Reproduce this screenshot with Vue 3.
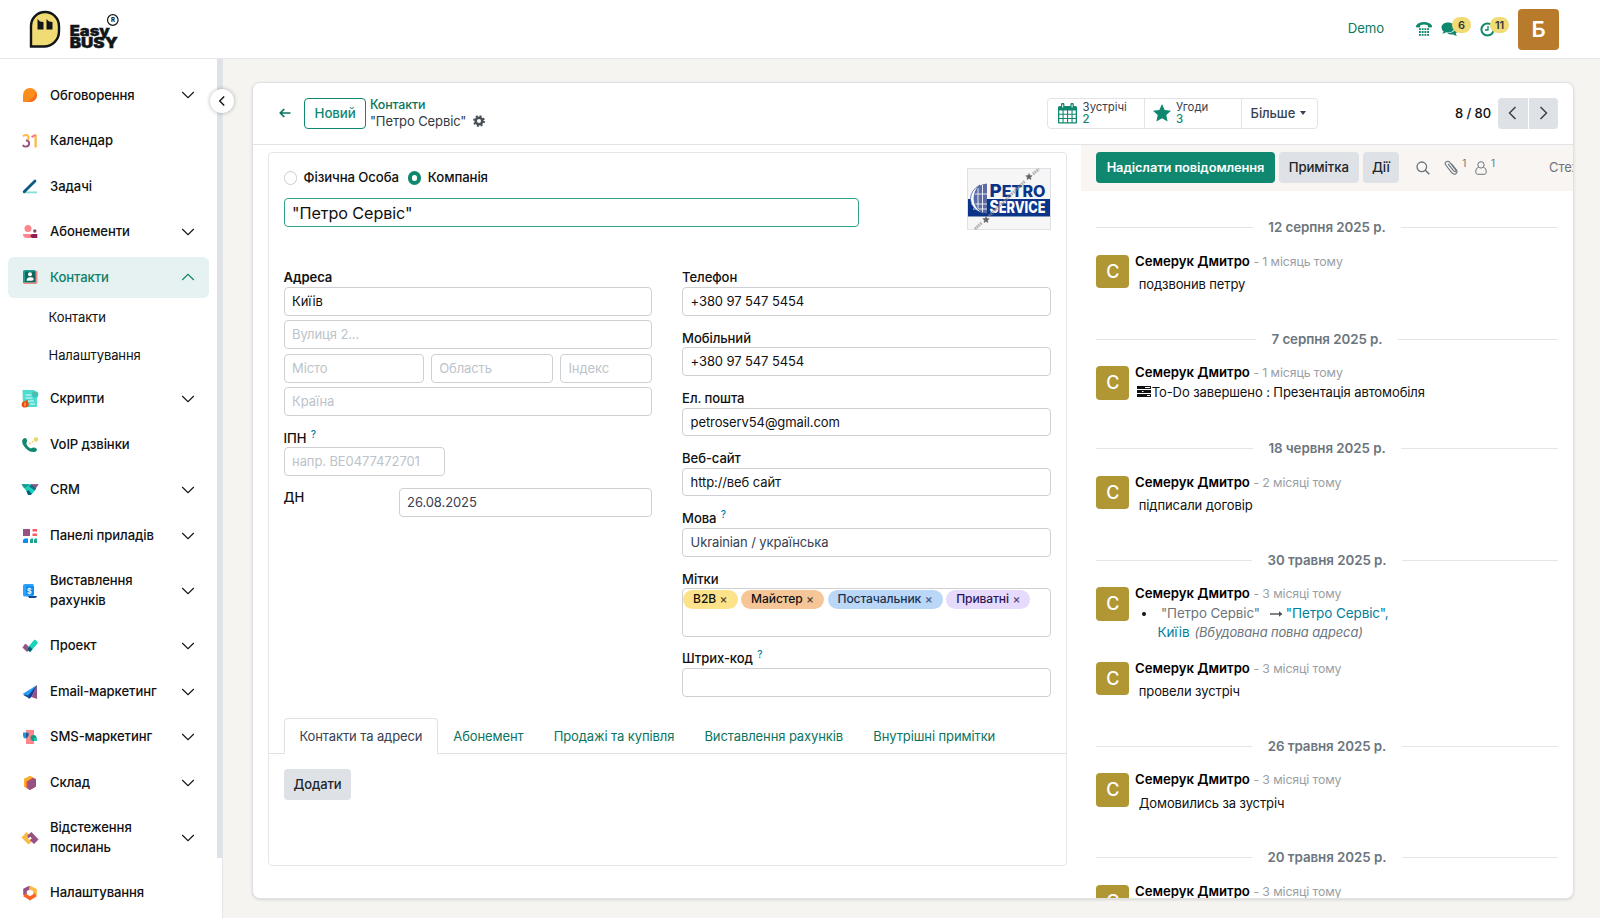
<script setup>
import { ref } from 'vue'

const menu = ref([
  { icon: 'discuss', label: 'Обговорення', arrow: true },
  { icon: 'calendar', label: 'Календар' },
  { icon: 'todo', label: 'Задачі' },
  { icon: 'members', label: 'Абонементи', arrow: true },
  { icon: 'contacts', label: 'Контакти', arrow: true, open: true, children: ['Контакти', 'Налаштування'] },
  { icon: 'scripts', label: 'Скрипти', arrow: true },
  { icon: 'voip', label: 'VoIP дзвінки' },
  { icon: 'crm', label: 'CRM', arrow: true },
  { icon: 'dashboard', label: 'Панелі приладів', arrow: true },
  { icon: 'invoice', label: 'Виставлення рахунків', arrow: true },
  { icon: 'project', label: 'Проект', arrow: true },
  { icon: 'email', label: 'Email-маркетинг', arrow: true },
  { icon: 'sms', label: 'SMS-маркетинг', arrow: true },
  { icon: 'stock', label: 'Склад', arrow: true },
  { icon: 'links', label: 'Відстеження посилань', arrow: true },
  { icon: 'settings', label: 'Налаштування' }
])

// 18x18 app icons
const icons = {
  discuss: '<path d="M2 16V9a7 7 0 0 1 14 0 7 7 0 0 1-7 7z" fill="#fb8c1e"/><path d="M15 5.500a7 7 0 0 1-6 10.500H4.500Q13 14 15 5.500z" fill="#fa6a1f"/>',
  calendar: '<g fill="none" stroke-width="1.900"><path d="M2 4.300Q3.100 3 4.900 3q2.700.2 2.700 2.700Q7.500 8 5 8.600" stroke="#fbb945"/><path d="M5 8.400q3.200.3 3.200 3Q8 14.600 4.800 14.600q-2 0-3-1.700" stroke="#985184"/><path d="M14.600 2.300v13.200" stroke="#fbb945" stroke-width="2.300"/><path d="M10.600 5.200l3.600-2.200" stroke="#f4737a" stroke-width="2"/></g>',
  todo: '<path d="M3 15.400h13" stroke="#88dfd3" stroke-width="1.900"/><path d="M3.200 14.700L14 4" stroke="#0b5b82" stroke-width="2.800" stroke-linecap="round"/>',
  members: '<circle cx="7" cy="5.500" r="3.500" fill="#fc868b"/><circle cx="13.800" cy="8" r="1.700" fill="#953b6b"/><path d="M2 11h9.500v4H6a4 4 0 0 1-4-4z" fill="#fc868b"/><path d="M9.500 13.500a2.500 2.500 0 0 1 2.500-2.500h4.300v4h-5z" fill="#8c1c52"/>',
  contacts: '<rect x="2" y="2" width="13" height="13.500" rx="1.500" fill="#1aa08e"/><path d="M15 3h1.500v11a2 2 0 0 1-2 2H3v-1.500h12z" fill="#f18a86"/><rect x="4" y="3.500" width="10" height="10.500" fill="#11675f"/><circle cx="9" cy="6.300" r="2" fill="#fff"/><path d="M5.500 12.800q0-3.500 3.500-3.500 3.700-.4 3.700 1.700 0 1.800-2 1.800z" fill="#fff"/>',
  scripts: '<path d="M1.500 0h12v5l4-1q-1.500 2-1.500 5v8h-14z" fill="#4fdcd0"/><circle cx="14" cy="4.500" r="3.300" fill="#35c7bd"/><path d="M4.500 5h6M4.500 8h7M6 11h7M9 14h5" stroke="#e2fbf8" stroke-width="1"/><path d="M13.300 3q1.800-.3.800 1.500" stroke="#f47f4a" fill="none"/><path d="M.6 14.500q0-3 3.500-3.500l2.900-1.500q-1 2.500.8 4.500 0 3.600-3.800 3.600-3.400 0-3.400-3.100z" fill="#e94b12"/><path d="M4 12.500v3.800" stroke="#fbb945" stroke-width="1.200"/>',
  voip: '<path d="M2.500 2.600Q4 1.200 5.300 2.600q1.600 2 .3 3.800-.7 1.200.4 2.900 1 1.700 2.700 2.600 1.400.7 2.700-.2 2.200-.8 4.400 1.200.7 2.200-2.300 3-4.600.6-8.600-3.500Q.6 8 1.200 4.400z" fill="#10876f"/><path d="M8 7.400h1.800M10.800 6l1.400-.6" stroke="#eed46c" stroke-width="1.600"/><circle cx="15" cy="3.500" r="2.200" fill="#eed46c"/>',
  crm: '<path d="M.5 3.200h17L11 12.500 9 14l-2-1.500z" fill="#1fc9b3"/><path d="M10 3.200h7.600L14 8.600z" fill="#985184"/><path d="M.5 3.200H9L6 6 3 7z" fill="#1a9a93"/><path d="M5 6.500L9 3.500l6 4.500-4.500 5.500z" fill="#1ad3bb"/><path d="M8 5.500l2.500-2 4.500 4-1.300 1.900z" fill="#1b6b84"/><path d="M5.500 10.500l2-1.500 3.500 4L9 14H7z" fill="#005e7a"/>',
  dashboard: '<rect x="2" y="2" width="7" height="7" fill="#985184"/><path d="M11.500 2H16v2.500h-4.500zM11.500 6.500H16V9h-4.500z" fill="#fc5b62"/><path d="M3.500 11.500H7V16H2v-3z" fill="#0c8cf5"/><path d="M10 11.500h2V16H9v-3zM14 11.500h2V16h-3v-3z" fill="#1aa58f"/>',
  invoice: '<path d="M2 4a2 2 0 0 1 2-2h8.500v12.500H4A2 2 0 0 1 2 13z" fill="#2ba1fb"/><path d="M5 4h8v9H5z" fill="#108cf0"/><path d="M7 14h9q-.4 2-2 2H8z" fill="#10498f"/><text x="8.200" y="11.500" font-size="7" font-weight="700" fill="#fff" text-anchor="middle">$</text>',
  project: '<path d="M4.500 7L9 11.500l-3 3-4-4z" fill="#985184" stroke="#985184" stroke-linejoin="round"/><path d="M13.500 3l2.500 1.500v2L9 14.700 6 12.200z" fill="#1ad3bb" stroke="#1ad3bb" stroke-linejoin="round"/><path d="M5.800 12.300L8.500 9.500l3 2.500L9 15z" fill="#0b5b72"/>',
  email: '<path d="M2.300 12L16 2.500 8.500 15.500z" fill="#124b9c"/><path d="M1.500 11L16 2 7 12.500z" fill="#2a9df4"/><path d="M16 2v14l-5.500-2z" fill="#985184"/><path d="M16 2l-5.500 12-3 2 1-3.500z" fill="#153f96"/>',
  sms: '<path d="M5 2h8v14H5z" fill="#fc868b"/><path d="M2 4.500h5.300v3q-.5 3-3 3-2.300-.2-2.300-3z" fill="#1b97df"/><circle cx="12.500" cy="10" r="3" fill="#159b85"/><path d="M13 10h3v3h-3z" fill="#22c8ad"/><path d="M5 5h2.500v3L5 10z" fill="#26598b"/>',
  stock: '<path d="M3 5l6-3 6 3v7.500L9 16l-6-3.500z" fill="#fa6a1f"/><path d="M3 5l6-3 3 1.500-7 4v6l-2-1z" fill="#fbb02d"/><path d="M6.500 7.500L12 4l3 1.500v7L9 16l-2.500-1.500z" fill="#985184"/>',
  links: '<path d="M.5 8.500L5.500 3l3.800 3.500-2.500 3L8.500 11l1.500-1.200 2 1.800-4.500 4z" fill="#fbb945"/><path d="M6.300 6.500L10.500 3l7 7.500-4.500 4.500-4-3.800 1.800-2-1.500-1.500-2 1.500z" fill="#985184"/>',
  settings: '<g fill="none" stroke-width="3.600"><path d="M4 11V5.900L9 3.300" stroke="#985184"/><path d="M8.500 3.300L14 6v5.200" stroke="#fbb945"/><path d="M14.800 10.700L9 14.300l-5.800-3.600" stroke="#fa6426"/></g>'
}

const contact = ref({
  name: '"Петро Сервіс"',
  street: 'Киїів',
  birthday: '26.08.2025'
})

const tags = [
  { text: 'B2B', color: 'yellow' },
  { text: 'Майстер', color: 'orange' },
  { text: 'Постачальник', color: 'blue' },
  { text: 'Приватні', color: 'violet' }
]

const tabs = ['Контакти та адреси', 'Абонемент', 'Продажі та купівля', 'Виставлення рахунків', 'Внутрішні примітки']
const activeTab = ref(0)

const thread = [
  { date: '12 серпня 2025 р.', items: [{ ago: '1 місяць тому', kind: 'note', body: 'подзвонив петру' }] },
  { date: '7 серпня 2025 р.', items: [{ ago: '1 місяць тому', kind: 'activity', body: 'To-Do завершено : Презентація автомобіля' }] },
  { date: '18 червня 2025 р.', items: [{ ago: '2 місяці тому', kind: 'note', body: 'підписали договір' }] },
  {
    date: '30 травня 2025 р.',
    items: [
      { ago: '3 місяці тому', kind: 'change' },
      { ago: '3 місяці тому', kind: 'note', body: 'провели зустріч' }
    ]
  },
  { date: '26 травня 2025 р.', items: [{ ago: '3 місяці тому', kind: 'note', body: 'Домовились за зустріч' }] },
  { date: '20 травня 2025 р.', items: [{ ago: '3 місяці тому', kind: 'note' }] }
]
</script>

<template>
  <div class="app">
    <header class="topbar">
      <svg class="brand" width="92" height="41" viewBox="0 0 92 41">
        <path d="M2 37.500V17a14 14 0 0 1 28 0v5.500a15 15 0 0 1-15 15z" fill="#f0db74" stroke="#121619" stroke-width="2.400" />
        <path d="M8.500 10l2.500 2.500 3.500.5v7.500h-6zM17.500 10l2.500 2.500 3.500.5v7.500h-6z" fill="#121619" />
        <text x="40.800" y="27" class="brand-text" textLength="40" lengthAdjust="spacingAndGlyphs">Easy</text>
        <text x="40.800" y="38.500" class="brand-text" textLength="48" lengthAdjust="spacingAndGlyphs">BUSY</text>
        <circle cx="83.800" cy="11" r="5.300" fill="#fff" stroke="#121619" stroke-width="1.200" />
        <text x="83.800" y="13.200" font-size="6" font-weight="700" text-anchor="middle">R</text>
      </svg>
      <div class="systray">
        <span class="demo">Demo</span>
        <svg class="ico-phone" width="18" height="16" viewBox="0 0 18 16">
          <path d="M1 6.200V4.700Q3.500 1 9 1t8 3.700v1.500l-3.700.3-.7-2.300Q9 3 5.400 4.200l-.7 2.300z" fill="#10876f" />
          <path d="M4 8.200h10M4 11h10M4 13.800h10" stroke="#10876f" stroke-width="1.800" stroke-dasharray="1.900 .8" />
        </svg>
        <span class="tray-item chat">
          <svg width="17" height="15" viewBox="0 0 17 15">
            <path d="M7 .5c4 0 6.500 2.300 6.500 5S11 10.500 7 10.500q-1 0-2-.2-1.500 1.200-3.700 1.300 1-1 1.200-2.300Q.5 7.800.5 5.500C.5 2.800 3 .5 7 .5z" fill="#10876f" />
            <path d="M14.500 5q2 1.200 2 3.300 0 1.900-1.700 3.200.2 1.300 1.200 2.300-2.300-.1-3.700-1.400-4 .5-6-1.200 7.700 0 8.200-6.200z" fill="#10876f" />
          </svg>
          <b class="badge">6</b>
        </span>
        <span class="tray-item clock">
          <svg width="15" height="15" viewBox="0 0 15 15">
            <circle cx="7.500" cy="7.500" r="6.100" fill="none" stroke="#10876f" stroke-width="2" />
            <path d="M8 4v4H5" fill="none" stroke="#10876f" stroke-width="1.300" />
          </svg>
          <b class="badge">11</b>
        </span>
        <span class="me">Б</span>
      </div>
    </header>

    <div class="body">
      <aside class="sidebar">
        <nav class="menu">
          <template v-for="item in menu" :key="item.icon">
            <div class="menu-item" :class="{ active: item.open }" @click="item.open = item.arrow && !item.open">
              <svg class="menu-icon" width="18" height="18" viewBox="0 0 18 18" v-html="icons[item.icon]"></svg>
              <span class="menu-label">{{ item.label }}</span>
              <svg v-if="item.arrow" class="menu-arrow" width="14" height="8" viewBox="0 0 14 8">
                <path :d="item.open ? 'M1.200 7L7 1.300 12.800 7' : 'M1.200 1L7 6.700 12.800 1'" fill="none" stroke="currentColor" stroke-width="1.100" />
              </svg>
            </div>
            <template v-if="item.open">
              <div v-for="child in item.children" :key="child" class="submenu-item">{{ child }}</div>
              <div class="submenu-end"></div>
            </template>
          </template>
        </nav>
        <div class="scrollbar"></div>
        <button class="collapse">
          <svg width="8" height="12" viewBox="0 0 8 12"><path d="M6.200 1.500L1.700 6l4.500 4.500" fill="none" stroke="#111" stroke-width="1.400" /></svg>
        </button>
      </aside>

      <main class="page">
        <section class="card">
          <div class="control-panel">
            <svg class="back" width="12" height="10" viewBox="0 0 12 10"><path d="M11.500 5H1.500M5.300 1L1.300 5l4 4" fill="none" stroke="#0b7460" stroke-width="1.700" /></svg>
            <button class="btn-new">Новий</button>
            <div class="crumbs">
              <a>Контакти</a>
              <div class="crumb-current">
                <span>{{ contact.name }}</span>
                <svg width="12" height="12" viewBox="0 0 12 12">
                  <circle cx="6" cy="6" r="3.300" fill="none" stroke="#495057" stroke-width="2.600" />
                  <circle cx="6" cy="6" r="4.900" fill="none" stroke="#495057" stroke-width="2" stroke-dasharray="1.950 1.900" />
                </svg>
              </div>
            </div>
            <div class="stats">
              <div class="stat">
                <svg width="19" height="21" viewBox="0 0 19 21">
                  <path d="M0 4.500A1.500 1.500 0 0 1 1.500 3H3V1.500a1.700 1.700 0 0 1 3.400 0V3h6V1.500a1.700 1.700 0 0 1 3.400 0V3h1.700A1.500 1.500 0 0 1 19 4.500v15a1 1 0 0 1-1 1H1a1 1 0 0 1-1-1z" fill="#10876f" />
                  <path d="M4.700 1.500v3M14.100 1.500v3" stroke="#fff" stroke-width="1" />
                  <path d="M1.300 7.500h3.200v3.200H1.300zM5.600 7.500h3.400v3.200H5.600zM10.100 7.500h3.400v3.200h-3.400zM14.600 7.500h3.100v3.200h-3.100zM1.300 11.800h3.200V15H1.300zM5.600 11.800h3.400V15H5.600zM10.100 11.800h3.400V15h-3.400zM14.600 11.800h3.100V15h-3.100zM1.300 16.100h3.200v3.100H1.300zM5.600 16.100h3.400v3.100H5.600zM10.100 16.100h3.400v3.100h-3.400zM14.600 16.100h3.100v3.100h-3.100z" fill="#fff" />
                </svg>
                <div class="stat-text">Зустрічі<b>2</b></div>
              </div>
              <div class="stat stat-deals">
                <svg width="18" height="18" viewBox="0 0 18 18"><path d="M9 0l2.700 6 6.300.7-4.700 4.400 1.300 6.500L9 14.300l-5.600 3.300 1.300-6.500L0 6.700 6.300 6z" fill="#10876f" /></svg>
                <div class="stat-text">Угоди<b>3</b></div>
              </div>
              <div class="stat-more">Більше <i class="caret"></i></div>
            </div>
            <div class="pager">
              <span>8 / 80</span>
              <button class="prev"><svg width="9" height="14" viewBox="0 0 9 14"><path d="M7.500 1L1.500 7l6 6" fill="none" stroke="#343a40" stroke-width="1.400" /></svg></button>
              <button class="next"><svg width="9" height="14" viewBox="0 0 9 14"><path d="M1.500 1l6 6-6 6" fill="none" stroke="#343a40" stroke-width="1.400" /></svg></button>
            </div>
          </div>

          <div class="content">
            <div class="form-side">
              <div class="sheet">
                <div class="sheet-head">
                  <div class="head-main">
                    <div class="radios">
                      <i class="radio"></i><span class="radio-label">Фізична Особа</span>
                      <i class="radio checked"></i><span class="radio-label">Компанія</span>
                    </div>
                    <div class="input name-input">{{ contact.name }}</div>
                  </div>
                  <svg class="photo" width="84" height="62" viewBox="0 0 84 62">
                    <rect x=".5" y=".5" width="83" height="61" fill="#f6f6f7" stroke="#dee2e6" />
                    <rect x="1" y="31" width="82" height="17.500" fill="#0b3488" />
                    <path d="M20 15.500C9 17 4 24 4 31.500S10 44 20 45.500z" fill="#5c6aa5" />
                    <path d="M11 20v23M15.500 17v28M6 26h14M4 36h16M6 41h14" stroke="#f6f6f7" stroke-width=".9" />
                    <path d="M13 17Q3.500 22 3.500 31.500q.5 10 13 14Q7 40 7 31t6-14z" fill="#fff" stroke="#31539b" stroke-width=".7" />
                    <text x="22.500" y="29.300" class="photo-text top" textLength="56" lengthAdjust="spacingAndGlyphs"><tspan font-size="18">P</tspan>ETRO</text>
                    <text x="22.500" y="45.300" class="photo-text bottom" textLength="56" lengthAdjust="spacingAndGlyphs"><tspan font-size="17">S</tspan>ERVICE</text>
                    <path d="M8 61l7-6.500M22 48L58 13M66 6l6-5" fill="none" stroke="#8c8c8c" stroke-opacity=".65" stroke-width="3" stroke-dasharray="1.700 .7" />
                    <path d="M19 48.500l1 2 2.200.2-1.600 1.600.4 2.200-2-1.100-2 1.100.4-2.200-1.600-1.600 2.200-.2zM62 5.500l1 2 2.200.2-1.600 1.600.4 2.200-2-1.100-2 1.100.4-2.200-1.600-1.600 2.200-.2z" fill="#666" stroke="#666" stroke-width=".5" />
                  </svg>
                </div>

                <div class="groups">
                  <div class="group">
                    <label class="bold">Адреса</label>
                    <div class="address">
                      <div class="input">{{ contact.street }}</div>
                      <div class="input empty">Вулиця 2...</div>
                      <div class="address-row">
                        <div class="input empty">Місто</div>
                        <div class="input empty">Область</div>
                        <div class="input empty">Індекс</div>
                      </div>
                      <div class="input empty">Країна</div>
                    </div>
                    <label class="vat-label">ІПН <sup>?</sup></label>
                    <div class="input empty vat">напр. BE0477472701</div>
                    <div class="birthday">
                      <label>ДН</label>
                      <div class="input dark">{{ contact.birthday }}</div>
                    </div>
                  </div>
                  <div class="group">
                    <label>Телефон</label>
                    <div class="input field">+380 97 547 5454</div>
                    <label>Мобільний</label>
                    <div class="input field">+380 97 547 5454</div>
                    <label>Ел. пошта</label>
                    <div class="input field">petroserv54@gmail.com</div>
                    <label>Веб-сайт</label>
                    <div class="input field">http://веб сайт</div>
                    <label>Мова <sup>?</sup></label>
                    <div class="input field dark">Ukrainian / українська</div>
                    <label>Мітки</label>
                    <div class="tags">
                      <span v-for="tag in tags" :key="tag.text" class="tag" :class="tag.color">{{ tag.text }}<i>×</i></span>
                    </div>
                    <label>Штрих-код <sup>?</sup></label>
                    <div class="input"></div>
                  </div>
                </div>

                <div class="tabs">
                  <div v-for="(tab, i) in tabs" :key="tab" class="tab" :class="{ current: i === activeTab }" @click="activeTab = i">{{ tab }}</div>
                </div>
                <button class="btn-grey btn-add">Додати</button>
              </div>
            </div>

            <div class="chatter">
              <div class="chatter-top">
                <button class="btn-send">Надіслати повідомлення</button>
                <button class="btn-grey btn-note">Примітка</button>
                <button class="btn-grey btn-actions">Дії</button>
                <svg class="ico-search" width="14" height="14" viewBox="0 0 14 14"><circle cx="5.800" cy="5.800" r="4.800" fill="none" stroke="#6c757d" stroke-width="1.300" /><path d="M9.300 9.300l4 4" stroke="#6c757d" stroke-width="1.600" /></svg>
                <svg class="ico-clip" width="14" height="16" viewBox="0 0 14 16"><path d="M4.200 4.200l5.600 7q.9.900 1.700.3.800-.7.100-1.700L5.600 2.200Q3.900.5 2.200 1.700.5 3.100 1.700 5l6.200 7.900q2 2.100 4 .8 1.900-1.600.6-3.700L7.800 4.100" fill="none" stroke="#6c757d" stroke-width="1.100" stroke-linecap="round" /></svg>
                <span class="count">1</span>
                <svg class="ico-user" width="12" height="14" viewBox="0 0 12 14"><circle cx="6" cy="3.900" r="3.200" fill="none" stroke="#6c757d" /><path d="M3.500 6.300Q.8 7 .8 10v1.300q0 2 1.900 2h6.600q1.900 0 1.900-2V10q0-3-2.700-3.700" fill="none" stroke="#6c757d" /></svg>
                <span class="count">1</span>
                <span class="follow">Стежити</span>
              </div>
              <div class="thread">
                <template v-for="day in thread" :key="day.date">
                  <div class="day"><hr /><span>{{ day.date }}</span><hr /></div>
                  <div v-for="(msg, i) in day.items" :key="i" class="message" :class="msg.kind">
                    <div class="avatar">С</div>
                    <div class="message-main">
                      <div class="message-head"><b>Семерук Дмитро</b> <small>- {{ msg.ago }}</small></div>
                      <ul v-if="msg.kind === 'change'" class="changes">
                        <li>
                          <span class="old">"Петро Сервіс"</span>
                          <svg width="13" height="8" viewBox="0 0 13 8"><path d="M0 4h10" stroke="#495057" stroke-width="1.400" /><path d="M9 1.300L12.500 4 9 6.700z" fill="#495057" /></svg>
                          <span class="new">"Петро Сервіс",<br />Киїів</span>
                          <em>(Вбудована повна адреса)</em>
                        </li>
                      </ul>
                      <div v-else class="message-body">
                        <svg v-if="msg.kind === 'activity'" width="14" height="11" viewBox="0 0 14 11">
                          <path d="M0 0h14v3H0zM0 4h14v3H0zM0 8h14v3H0z" fill="#111" />
                          <path d="M8 1.500h5M5 5.500h1.500M10 9.500h3" stroke="#fff" stroke-width="1" />
                        </svg>{{ msg.body }}
                      </div>
                    </div>
                  </div>
                </template>
              </div>
            </div>
          </div>
        </section>
      </main>
    </div>
  </div>
</template>

<style>
body {
  margin: 0;
  background: #f5f4f0;
  overflow: hidden;
}
</style>

<style scoped>
* {
  box-sizing: border-box;
}
.app {
  display: flex;
  flex-direction: column;
  height: 918px;
  overflow: hidden;
  font-family: Inter, 'Liberation Sans', sans-serif;
  font-size: 13px;
  letter-spacing: -0.1px;
  line-height: 19px;
  color: #111;
}
button {
  font: inherit;
  letter-spacing: inherit;
  border: 0;
  margin: 0;
  padding: 0;
}

/* top bar */
.topbar {
  display: flex;
  justify-content: space-between;
  align-items: center;
  flex: none;
  height: 59px;
  padding: 0 41px 0 29px;
  background: #fff;
  border-bottom: 1px solid #e6e7ea;
}
.brand-text {
  font-size: 14px;
  font-weight: 900;
  letter-spacing: 0;
  fill: #121619;
  stroke: #121619;
  stroke-width: 0.4px;
}
.systray {
  display: flex;
  align-items: center;
}
.demo {
  margin: -2px 31px 0 0;
  color: #0b7a60;
  font-size: 13.2px;
}
.ico-phone {
  margin-right: 8px;
}
.tray-item {
  position: relative;
  display: flex;
}
.chat {
  width: 39px;
}
.clock {
  width: 38px;
}
.badge {
  position: absolute;
  left: 11px;
  top: -5px;
  min-width: 19px;
  height: 16px;
  padding: 0 4px;
  border-radius: 8px;
  background: #f0db74;
  color: #333;
  font-size: 11px;
  font-weight: 600;
  line-height: 16px;
  text-align: center;
}
.clock .badge {
  left: 10px;
}
.me {
  width: 41px;
  height: 41px;
  border-radius: 4px;
  background: #b87a2b;
  color: #fff;
  font-size: 22px;
  font-weight: 600;
  line-height: 41px;
  text-align: center;
}

/* sidebar */
.body {
  display: flex;
  flex: 1;
  min-height: 0;
}
.sidebar {
  position: relative;
  display: flex;
  flex: none;
  width: 223px;
  background: #fff;
  border-right: 1px solid #e3e5e8;
}
.menu {
  flex: 1;
  padding: 15.5px 8.4px 0 7.6px;
  overflow: hidden;
}
.menu-item {
  display: flex;
  align-items: center;
  min-height: 41.55px;
  margin-bottom: 4px;
  padding: 11px 14px 11px 13.5px;
  border-radius: 6px;
  font-size: 13.1px;
  font-weight: 500;
}
.menu-icon {
  flex: none;
  margin-right: 11px;
}
.menu-label {
  flex: 1;
  padding-right: 20px;
  line-height: 19.4px;
}
.menu-item.active {
  margin-bottom: 0;
  background: #e5f2f1;
  color: #0f8069;
}
.submenu-item {
  height: 38px;
  padding-left: 41px;
  line-height: 38px;
}
.submenu-end {
  height: 4px;
}
.scrollbar {
  width: 5px;
  height: 799px;
  background: #dee2e8;
}
.collapse {
  position: absolute;
  right: -12px;
  top: 30px;
  z-index: 2;
  display: flex;
  align-items: center;
  justify-content: center;
  width: 24px;
  height: 24px;
  border-radius: 50%;
  background: #fff;
  box-shadow: 0 0 4px rgba(0, 0, 0, 0.3);
}

/* card */
.page {
  flex: 1;
  min-width: 0;
  padding: 22.5px 26px 0 29.4px;
  background: #f5f4f0;
}
.card {
  display: flex;
  flex-direction: column;
  height: 817px;
  background: #fff;
  border: 1px solid #e0e1e3;
  border-radius: 8px;
  box-shadow: 0 1px 3px rgba(0, 0, 0, 0.12);
  overflow: hidden;
}
.control-panel {
  display: flex;
  align-items: center;
  flex: none;
  height: 62.2px;
  padding: 0.6px 15px 0 25.5px;
  border-bottom: 1px solid #e1e3e6;
}
.back {
  margin-right: 13.5px;
}
.btn-new {
  width: 61.5px;
  height: 30.5px;
  margin-right: 4px;
  border: 1px solid #10876f;
  border-radius: 4px;
  background: #fff;
  color: #10876f;
  font-size: 13.33px;
  font-weight: 500;
}
.crumbs {
  line-height: 16px;
}
.crumbs a {
  display: block;
  color: #0b7460;
  font-size: 12.4px;
  font-weight: 500;
}
.crumb-current {
  display: flex;
  align-items: center;
  gap: 6.5px;
  color: #343a40;
}
.stats {
  display: flex;
  height: 30.5px;
  margin-left: auto;
  margin-right: 137.5px;
  border: 1px solid #e1e3e6;
  border-radius: 4px;
  color: #374151;
}
.stat {
  display: flex;
  align-items: center;
  gap: 5.5px;
  width: 97px;
  padding-left: 10.5px;
  border-right: 1px solid #e1e3e6;
}
.stat-deals {
  padding-left: 8px;
}
.stat-text {
  font-size: 11.4px;
  letter-spacing: 0;
  line-height: 12.5px;
}
.stat-text b {
  display: block;
  color: #10876f;
  font-weight: 500;
}
.stat-more {
  display: flex;
  align-items: center;
  width: 75px;
  padding-left: 9px;
  font-weight: 500;
}
.caret {
  margin-left: 5px;
  border: 3.5px solid transparent;
  border-top: 4px solid #374151;
  border-bottom: 0;
}
.pager {
  display: flex;
  align-items: center;
  font-weight: 500;
}
.pager span {
  margin-right: 7px;
}
.pager button {
  display: flex;
  align-items: center;
  justify-content: center;
  width: 29.5px;
  height: 30.5px;
  background: #dee2e6;
}
.pager .prev {
  margin-right: 1px;
  border-radius: 4px 0 0 4px;
}
.pager .next {
  border-radius: 0 4px 4px 0;
}

/* form */
.content {
  display: flex;
  flex: 1;
  min-height: 0;
}
.form-side {
  flex: none;
  width: 827.6px;
  padding: 7px 14.4px 0 14.7px;
}
.sheet {
  height: 714px;
  border: 1px solid #e4e6e9;
  border-radius: 4px;
}
.sheet-head {
  display: flex;
  justify-content: space-between;
  height: 115.6px;
  padding: 15.2px 15px 0 14.5px;
}
.radios {
  display: flex;
  align-items: center;
  height: 20px;
  margin-bottom: 10px;
}
.radio {
  width: 13.5px;
  height: 13.5px;
  margin-right: 6.5px;
  border: 1px solid #c9cdd2;
  border-radius: 50%;
}
.radio.checked {
  margin-left: 9px;
  border: 4px solid #10876f;
}
.radio-label {
  font-size: 13.2px;
  font-weight: 500;
}
.name-input.input {
  width: 575px;
  height: 29.5px;
  line-height: 28px;
  font-size: 16.2px;
  border-color: #2fa389;
}
.photo-text {
  font-size: 15.5px;
  font-weight: 800;
  letter-spacing: 0;
}
.photo-text.top {
  fill: #0b3488;
}
.photo-text.bottom {
  fill: #fff;
}
.groups {
  display: flex;
  gap: 30px;
  height: 450px;
  padding: 0 15px 0 14.5px;
}
.group {
  display: flex;
  flex-direction: column;
  flex: 1;
}
label {
  display: block;
  height: 18.7px;
  font-size: 13.1px;
  font-weight: 500;
  line-height: 18px;
  white-space: nowrap;
}
label.bold {
  font-weight: 600;
}
sup {
  position: relative;
  top: -5px;
  margin-left: 1px;
  color: #0180a5;
  font-size: 10px;
  line-height: 0;
  vertical-align: baseline;
}
.input {
  height: 28.7px;
  padding: 0 7.5px;
  border: 1px solid #ced0d3;
  border-radius: 4px;
  line-height: 27px;
  white-space: nowrap;
}
.input.empty {
  color: #bcc3ca;
}
.input.dark {
  color: #374151;
}
.field {
  margin-bottom: 12.9px;
}
.address {
  display: flex;
  flex-direction: column;
  gap: 4.8px;
}
.address-row {
  display: grid;
  grid-template-columns: 140px 122px 1fr;
  gap: 7.2px;
}
.vat-label {
  margin-top: 12.7px;
}
.vat {
  width: 161px;
}
.birthday {
  display: flex;
  justify-content: space-between;
  margin-top: 12.3px;
}
.birthday .input {
  width: 253.5px;
}
.tags {
  display: flex;
  align-items: flex-start;
  gap: 3.6px;
  height: 48.5px;
  margin-bottom: 12.6px;
  padding: 1px 0;
  border: 1px solid #ced0d3;
  border-radius: 4px;
}
.tag {
  height: 18.5px;
  padding: 0 10px;
  border-radius: 10px;
  font-size: 12.05px;
  font-weight: 500;
  line-height: 18.5px;
  white-space: nowrap;
}
.tag i {
  margin-left: 3.5px;
  font-style: normal;
  opacity: 0.75;
}
.yellow {
  background: #fce38a;
}
.orange {
  background: #f6c699;
}
.blue {
  background: #bbd7f8;
  color: #1a3350;
}
.violet {
  background: #e6dbfc;
  color: #2d1457;
}
.tabs {
  display: flex;
  height: 36px;
  padding-left: 14.5px;
  border-bottom: 1px solid #dee2e6;
}
.tab {
  height: 36px;
  padding: 0 15.1px;
  border: 1px solid transparent;
  border-width: 1px 0;
  line-height: 34px;
  color: #0b7460;
  white-space: nowrap;
}
.tab.current {
  border: 1px solid #dee2e6;
  border-bottom-color: #fff;
  border-radius: 4px 4px 0 0;
  padding: 0 14.8px;
  background: #fff;
  color: #374151;
}
.btn-grey {
  height: 30.5px;
  border-radius: 4px;
  background: #dee2e6;
  color: #212529;
  font-weight: 500;
}
.btn-add {
  width: 67.7px;
  margin: 15px 0 0 14.5px;
}

/* chatter */
.chatter {
  flex: 1;
  min-width: 0;
  overflow: hidden;
}
.chatter-top {
  display: flex;
  align-items: center;
  height: 46px;
  padding-left: 15px;
  background: #f8f5f2;
  color: #6c757d;
  white-space: nowrap;
}
.btn-send {
  flex: none;
  width: 179px;
  height: 30.5px;
  border-radius: 4px;
  background: #10876f;
  color: #fff;
  font-size: 12.85px;
  font-weight: 600;
}
.chatter-top .btn-grey {
  flex: none;
  margin-left: 3.7px;
  font-size: 13.2px;
}
.btn-note {
  width: 80.2px;
}
.btn-actions {
  width: 36.6px;
}
.ico-search {
  flex: none;
  margin-left: 17px;
}
.ico-clip {
  flex: none;
  margin-left: 14px;
}
.ico-user {
  flex: none;
  margin-left: 9px;
}
.count {
  margin: -9px 0 0 4px;
  font-size: 10px;
}
.follow {
  margin-left: 54px;
}
.thread {
  padding: 7.3px 15px 0;
}
.day {
  display: flex;
  align-items: center;
  gap: 15.5px;
  height: 20px;
  margin: 20px 0 16.8px;
  color: #6c757d;
  font-size: 13.33px;
  font-weight: 600;
  letter-spacing: -0.05px;
}
.day hr {
  flex: 1;
  height: 1px;
  margin: 0;
  border: 0;
  background: #e3e5e8;
}
.message {
  display: flex;
  height: 54.8px;
}
.message.activity {
  height: 52.6px;
}
.message.change {
  height: 74.2px;
}
.avatar {
  flex: none;
  width: 33.5px;
  height: 33.5px;
  margin-right: 5.6px;
  border-radius: 4px;
  background: #b19733;
  color: #fff;
  font-size: 18px;
  font-weight: 500;
  line-height: 33.5px;
  text-align: center;
}
.message-head {
  height: 19px;
  margin-top: -3px;
}
.message-head b {
  font-size: 13.15px;
  font-weight: 600;
  letter-spacing: 0;
  color: #000;
}
.message-head small {
  font-size: 12.3px;
  color: #9a9fa5;
}
.message-body {
  padding: 4.5px 0 0 3.7px;
}
.activity .message-body {
  padding: 0.5px 0 0 1.7px;
}
.activity svg {
  margin-right: 1px;
}
.changes {
  margin: 0;
  padding: 0.5px 0 0 22.4px;
  line-height: 19.4px;
}
.changes .old {
  margin-left: 3.5px;
  font-size: 13.33px;
}
.changes .old,
.changes em {
  color: #6c757d;
}
.changes svg {
  margin: 0 3px 0 10px;
}
.changes .new {
  color: #017e9e;
  font-size: 13.5px;
}
.changes em {
  margin-left: 5px;
  font-size: 12.9px;
}
</style>
